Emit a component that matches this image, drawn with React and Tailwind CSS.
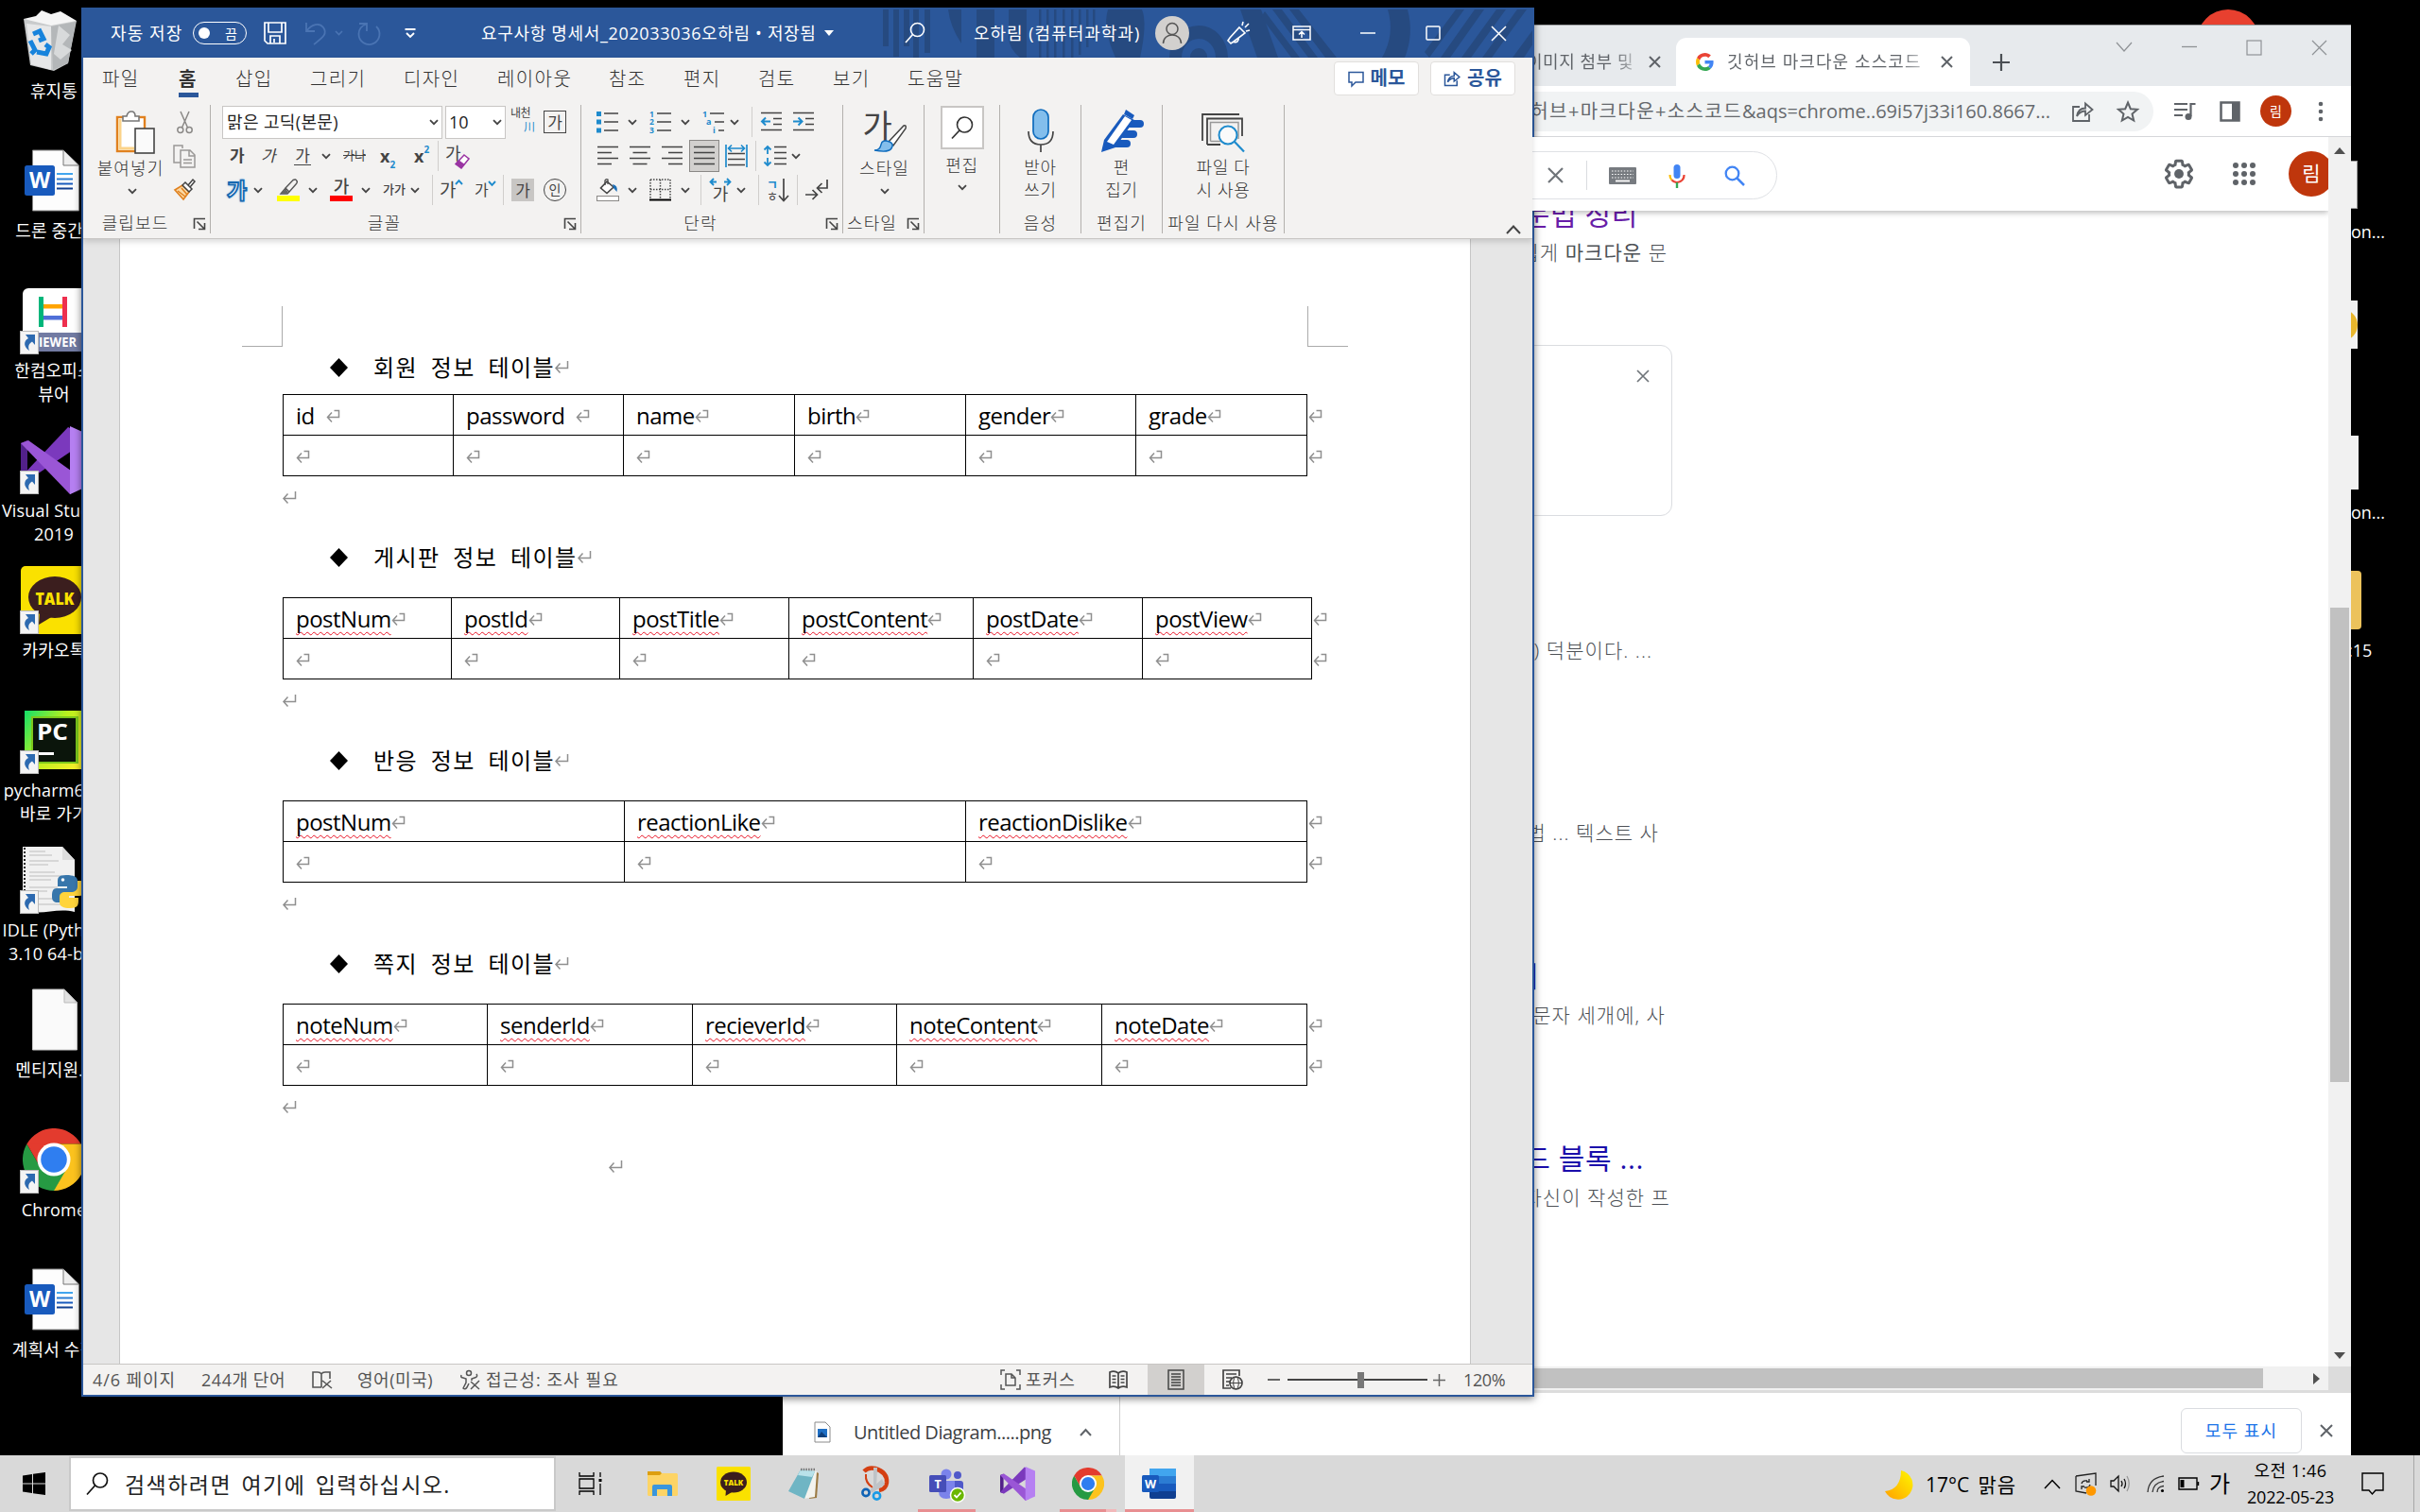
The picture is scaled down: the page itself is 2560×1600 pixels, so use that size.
import React from "react";

/* ---------- small shared pieces ---------- */

const Svg = ({ w, h, className = "", children }) => (
  <svg width={w} height={h} viewBox={`0 0 ${w} ${h}`} fill="none" className={`shrink-0 overflow-visible ${className}`}>
    {children}
  </svg>
);

const Chev = ({ className = "" }) => (
  <Svg w={10} h={7} className={className}>
    <path d="M1 1.2 5 5.2 9 1.2" stroke="#444" strokeWidth="1.8" />
  </Svg>
);

const Sep = ({ className = "" }) => <div className={`h-8 w-px shrink-0 bg-[#d0cecc] ${className}`} />;

const Cross = ({ size = 14, color = "#5f6368", sw = 2, className = "" }) => (
  <Svg w={size} h={size} className={className}>
    <path d={`M1 1 ${size - 1} ${size - 1}M${size - 1} 1 1 ${size - 1}`} stroke={color} strokeWidth={sw} />
  </Svg>
);

const Mark = ({ cell, className = "" }) => (
  <Svg w={15} h={15} className={className}>
    {cell ? (
      <path d="M6 3.500 1.500 8.500 6 13.500M1.500 8.500H13.500V1.500H8.500" stroke="#8f8f8f" strokeWidth="1.500" />
    ) : (
      <path d="M5.500 3.500 1 8.500 5.500 13.500M1 8.500H13.500V1" stroke="#8f8f8f" strokeWidth="1.500" />
    )}
  </Svg>
);

/* ---------- desktop icons ---------- */

const BinIcon = () => (
  <Svg w={66} h={72}>
    <path d="M1 13 57 15 48 60 33 68 8 62Z" fill="#c9cbcc" />
    <path d="M1 13 14 10 20 4 30 8 40 5 57 15 30 20Z" fill="#f5f5f5" />
    <path d="M4 18 30 21V67L9 61Z" fill="#e6e7e8" />
    <path d="M30 21 56 16 48 60 32 67Z" fill="#b4b7b9" />
    <path d="M38 20 50 30 42 40 52 46 40 56 33 50Z" fill="#d8dadb" />
    <path d="M11 29 18 26 22 34 17 36M8 36 13 46 9 50M15 48 25 50 28 43 24 40" stroke="#1783dc" strokeWidth="5" />
  </Svg>
);

const WordDoc = () => (
  <Svg w={66} h={72}>
    <path d="M10.500 4H43L59.500 20V68H10.500Z" fill="#fdfdfd" stroke="#888" />
    <path d="M43 4V20H59" fill="#eee" stroke="#777" />
    <rect x="2" y="20" width="32" height="32" rx="2.500" fill="#185abd" />
    <text x="18" y="44" fill="#fff" fontSize="23" fontWeight="700" textAnchor="middle" fontFamily="Open Sans">W</text>
    <path d="M36 29H53" stroke="#41a5ee" strokeWidth="2" />
    <path d="M36 34.500H53" stroke="#2b7cd3" strokeWidth="2" />
    <path d="M36 39.500H53" stroke="#185abd" strokeWidth="2" />
    <path d="M36 44.500H53" stroke="#103f91" strokeWidth="2" />
  </Svg>
);

const HancomIcon = () => (
  <Svg w={66} h={72}>
    <rect x="0" y="2" width="72" height="67" rx="6" fill="#fff" />
    <path d="M0 49H72V69H5Q0 69 0 64Z" fill="#727ba3" />
    <rect x="19" y="19" width="25" height="4.500" fill="#ffa400" />
    <rect x="19" y="31" width="25" height="4.500" fill="#4f6fd8" />
    <rect x="17" y="11" width="5" height="32" fill="#00b67a" />
    <rect x="42" y="11" width="5" height="32" fill="#ee2f4e" />
    <text x="17" y="63.500" fill="#fff" fontSize="14" fontWeight="700" textLength="40" lengthAdjust="spacingAndGlyphs" fontFamily="Open Sans">IEWER</text>
  </Svg>
);

const VsShape = ({ w, h, className = "" }) => (
  <svg width={w} height={h} viewBox="0 0 72 72" preserveAspectRatio="none" className={`shrink-0 ${className}`}>
    <path d="M0 18 7 15V57L0 54Z" fill="#52218a" />
    <path d="M0 54 50 1 60 6V22L8 57Z" fill="#7b39bd" />
    <path d="M0 18 8 15 60 52V68L52 72Z" fill="#9a56d6" />
    <path d="M52 0 72 9V63L52 72Z" fill="#b680f2" />
  </svg>
);

const KakaoIcon = ({ s, r = 5 }) => (
  <svg width={s} height={s} viewBox="0 0 72 72" className="shrink-0">
    <rect width="72" height="72" rx={r} fill="#fae100" />
    <ellipse cx="36" cy="33" rx="28" ry="22" fill="#3b1e1e" />
    <path d="M20 48 19 62 34 53Z" fill="#3b1e1e" />
    <text x="36" y="40.500" fill="#fae100" fontSize="18" fontWeight="800" textAnchor="middle" textLength="41" lengthAdjust="spacingAndGlyphs" fontFamily="Open Sans">TALK</text>
  </svg>
);

const PyCharmIcon = () => (
  <Svg w={66} h={72}>
    <defs>
      <linearGradient id="pcg" x1="0" y1="0" x2="1" y2="0.6">
        <stop offset="0" stopColor="#12e06a" />
        <stop offset="0.5" stopColor="#b8f01e" />
        <stop offset="1" stopColor="#f5f02a" />
      </linearGradient>
    </defs>
    <rect x="2" y="5" width="68" height="62" fill="url(#pcg)" />
    <rect x="9" y="11" width="50" height="50" fill="#7cc71c" />
    <rect x="11" y="13" width="45" height="46" fill="#0b150b" />
    <text x="15" y="36" fill="#fff" fontSize="24" fontWeight="700" textLength="33" lengthAdjust="spacingAndGlyphs" fontFamily="Open Sans">PC</text>
    <rect x="16" y="49" width="17" height="3" fill="#fff" />
  </Svg>
);

const PythonMark = () => (
  <g>
    <path d="M46 31C37 31 37 34 37 39V43H47V45H36C31 45 31 50 31 54C31 58 33 60 37 60H40V55C40 51 43 50 47 50H52C56 50 58 48 58 45V37C58 33 54 31 46 31Z" fill="#3776ab" />
    <circle cx="42.500" cy="36" r="1.800" fill="#fff" />
    <path d="M50 66C58 66 59 63 59 58V55H49V53H60C65 53 66 48 66 43C66 39 64 37 60 37H58V43C58 47 55 49 51 49H45C41 49 39 51 39 54V60C39 64 43 66 50 66Z" fill="#ffd43b" />
  </g>
);

const IdleIcon = () => (
  <Svg w={66} h={72}>
    <path d="M0 1H42L55 15V70C36 65 22 74 4 69H0Z" fill="#f1f1f1" />
    <path d="M42 1V15H55Z" fill="#ddd" />
    <path d="M2 2V68" stroke="#222" strokeWidth="2" strokeDasharray="2 2" />
    {[6, 10, 16, 20, 28, 32, 36, 44, 48, 56, 62].map((y, i) => (
      <path key={y} d={`M7 ${y}H${24 + ((i * 7) % 18)}`} stroke="#bdbdbd" />
    ))}
    <PythonMark />
  </Svg>
);

const BlankDoc = () => (
  <Svg w={66} h={72}>
    <path d="M10.500 4H44L57.500 18V68H10.500Z" fill="#fafafa" stroke="#ccc" />
    <path d="M44 4V18H57.500Z" fill="#e2e2e2" stroke="#bbb" />
  </Svg>
);

const ChromeMark = ({ s }) => (
  <svg width={s} height={s} viewBox="0 0 66 66" className="shrink-0">
    <path d="M33 33 4.400 16.500A33 33 0 0 1 61.600 16.500H33Z" fill="#e33b2e" />
    <path d="M33 33 61.600 16.500A33 33 0 0 1 33 66L19 41Z" fill="#fcc31e" />
    <path d="M4.400 16.500A33 33 0 0 0 33 66L47.300 41.200 33 33 18.700 41.200Z" fill="#269a43" />
    <path d="M4.400 16.500 18.700 41.200 33 33V16.500Z" fill="#e33b2e" />
    <path d="M33 16.500H61.600L60 25 47.300 41.200 33 66 33 33Z" fill="#fcc31e" />
    <path d="M33 66 47.300 41.200 20 38 18.700 41.200Z" fill="#269a43" />
    <circle cx="33" cy="33" r="17.500" fill="#fff" />
    <circle cx="33" cy="33" r="13.800" fill="#2f7ef0" />
  </svg>
);

const desktopItems = [
  { icon: <BinIcon />, lines: ["휴지통"] },
  { icon: <WordDoc />, lines: ["드론 중간.."] },
  { icon: <HancomIcon />, lines: ["한컴오피스", "뷰어"], link: true },
  { icon: <VsShape w={72} h={72} className="-ml-[2px]" />, lines: ["Visual Studio", "2019"], link: true },
  { icon: <div className="-ml-[2px]"><KakaoIcon s={72} /></div>, lines: ["카카오톡"], link: true },
  { icon: <PyCharmIcon />, lines: ["pycharm64 -", "바로 가기"], link: true },
  { icon: <IdleIcon />, lines: ["IDLE (Python", "3.10 64-bit)"], link: true },
  { icon: <BlankDoc />, lines: ["멘티지원..."] },
  { icon: <ChromeMark s={66} />, lines: ["Chrome"], link: true },
  { icon: <WordDoc />, lines: ["계획서 수정"] },
];

const Desktop = () => (
  <div className="absolute left-0 top-[7px] flex w-[114px] flex-col">
    {desktopItems.map((d, i) => (
      <div key={i} className="flex h-[148px] flex-col items-center">
        <div className="relative flex h-[72px] w-[66px] items-center">
          {d.icon}
          {d.link && (
            <svg width="20" height="25" viewBox="0 0 20 25" className="absolute bottom-0 left-[-3px]">
              <rect x="0.5" y="0.5" width="19" height="24" fill="#f4f4f4" stroke="#bbb" />
              <path d="M6 4H16V15L13 11.500C9 14 8.500 17 10 21C4 17 3.500 11 9 8Z" fill="#2d6ab0" />
            </svg>
          )}
        </div>
        <div className="mt-[5px] whitespace-nowrap text-center text-[18px] leading-[25px] tracking-[0.01em] text-white">
          {d.lines.map((l) => (
            <div key={l}>{l}</div>
          ))}
        </div>
      </div>
    ))}
  </div>
);

const RightDesktop = () => (
  <>
    <div className="absolute left-[2324px] top-[10px] h-[66px] w-[66px] rounded-full bg-[#e8402f]" />
    <div className="absolute left-[2440px] top-[170px] flex w-[100px] flex-col text-[18px] leading-[25px] text-white">
      <div className="h-[51px] w-[54px] border border-[#999] bg-[#f1f1f1]" />
      <div className="mt-[12px] pl-[47px]">on...</div>
      <div className="mt-[60px] flex h-[51px] w-[54px] items-center justify-end bg-[#f1f1f1]">
        <div className="h-[34px] w-[34px] rounded-full bg-[#e8b62c]" />
      </div>
      <div className="mt-[92px] h-[57px] w-[55px] bg-[#f1f1f1]" />
      <div className="mt-[12px] pl-[47px]">on...</div>
      <div className="mt-[49px] h-[62px] w-[58px] rounded-sm bg-[#ecc25c]" />
      <div className="mt-[10px] pl-[44px]">:15</div>
    </div>
  </>
);

/* ---------- browser window ---------- */

const GoogleG = () => (
  <svg width="19" height="19" viewBox="0 0 48 48" className="shrink-0">
    <path fill="#EA4335" d="M24 9.500c3.540 0 6.710 1.220 9.210 3.600l6.850-6.850C35.900 2.380 30.470 0 24 0 14.620 0 6.510 5.380 2.560 13.220l7.980 6.190C12.430 13.720 17.740 9.500 24 9.500z" />
    <path fill="#4285F4" d="M46.980 24.550c0-1.570-.15-3.090-.38-4.550H24v9.020h12.940c-.58 2.960-2.260 5.480-4.780 7.180l7.730 6c4.510-4.180 7.090-10.360 7.090-17.650z" />
    <path fill="#FBBC05" d="M10.530 28.590c-.48-1.450-.76-2.990-.76-4.590s.27-3.140.76-4.590l-7.980-6.190C.92 16.460 0 20.120 0 24c0 3.880.92 7.540 2.560 10.780l7.970-6.190z" />
    <path fill="#34A853" d="M24 48c6.480 0 11.930-2.130 15.890-5.810l-7.730-6c-2.150 1.450-4.920 2.300-8.160 2.300-6.260 0-11.570-4.220-13.470-9.910l-7.980 6.190C6.510 42.620 14.620 48 24 48z" />
  </svg>
);

const ShareIcon = ({ s = 24, color = "#5f6368", sw = 1.8 }) => (
  <svg width={s} height={s} viewBox="0 0 24 24" fill="none" stroke={color} strokeWidth={sw} className="shrink-0">
    <path d="M9 7H2V22H19V15" />
    <path d="M6 17C7 11 10 8.500 15 8.500V3.500L22.500 10 15 16V11.500C11 11.500 8.500 13 6 17Z" />
  </svg>
);

const BrowserTabs = () => (
  <div className="flex h-[65px] items-stretch border-t border-[#9a9c9e] bg-[#e7eaed] pl-[772px]">
    <div className="flex w-[173px] items-center justify-end rounded-br-xl pt-[13px] text-[18px] text-[#5f6368]">
      <span className="whitespace-nowrap bg-gradient-to-r from-[#5f6368] from-80% to-[#b5b8bb] bg-clip-text tracking-[0.03em] text-transparent">이미지 첨부 및</span>
      <Cross size={13} className="ml-[16px] mr-[16px]" />
    </div>
    <div className="mt-[13px] flex w-[311px] items-center rounded-t-[11px] bg-white pl-[21px] text-[18px]">
      <GoogleG />
      <div className="ml-[14px] w-[226px] overflow-hidden whitespace-nowrap bg-gradient-to-r from-[#5f6368] from-80% to-[#dfe0e2] to-95% bg-clip-text tracking-[0.06em] text-transparent">
        깃허브 마크다운 소스코드
      </div>
      <Cross size={13} />
    </div>
    <Svg w={20} h={20} className="ml-[23px] mt-[29px]">
      <path d="M10 1V19M1 10H19" stroke="#4b4f54" strokeWidth="2.200" />
    </Svg>
    <div className="ml-[111px] flex h-[46px] items-center">
      <Svg w={18} h={12}><path d="M1 1 9 10 17 1" stroke="#8f9296" strokeWidth="1.200" /></Svg>
      <Svg w={18} h={12} className="ml-[51px]"><path d="M1 5.500H17" stroke="#8f9296" strokeWidth="1.300" /></Svg>
      <Svg w={17} h={17} className="ml-[51px]"><rect x="1" y="1" width="15" height="15" stroke="#8f9296" strokeWidth="1.200" /></Svg>
      <Cross size={17} color="#8f9296" sw={1.200} className="ml-[52px]" />
    </div>
  </div>
);

const AddressBar = () => (
  <div className="flex h-[54px] items-center border-b border-[#d5d7da] bg-white pl-[12px]">
    <div className="flex h-[42px] w-[1438px] items-center justify-end rounded-full bg-[#f1f3f4] text-[20px] text-[#66696d]">
      <span className="whitespace-nowrap"><span className="tracking-[0.07em]">깃허브+마크다운+소스코드</span>&amp;aqs=chrome..69i57j33i160.8667...</span>
      <span className="ml-[22px]"><ShareIcon /></span>
      <Svg w={24} h={24} className="ml-[24px] mr-[15px]">
        <path d="M12 2.500 14.800 9.200 22 9.800 16.500 14.500 18.200 21.500 12 17.800 5.800 21.500 7.500 14.500 2 9.800 9.200 9.200Z" stroke="#5f6368" strokeWidth="2" />
      </Svg>
    </div>
    <Svg w={24} h={22} className="ml-[21px]">
      <path d="M1 3H15M1 9H15M1 15H10" stroke="#5f6368" strokeWidth="2.200" />
      <path d="M18.500 16V3H23.500" stroke="#5f6368" strokeWidth="2.200" />
      <circle cx="16" cy="16.500" r="3.500" fill="#5f6368" />
    </Svg>
    <Svg w={22} h={22} className="ml-[25px]">
      <path d="M1.500 1.500H20.500V20.500H1.500Z" stroke="#5f6368" strokeWidth="2.500" />
      <path d="M13 1H21V21H13Z" fill="#5f6368" />
    </Svg>
    <div className="ml-[21px] flex h-[33px] w-[33px] items-center justify-center rounded-full bg-[#bf360c] text-[14px] text-white">림</div>
    <Svg w={6} h={22} className="ml-[28px]">
      <circle cx="3" cy="3" r="2.300" fill="#5f6368" /><circle cx="3" cy="11" r="2.300" fill="#5f6368" /><circle cx="3" cy="19" r="2.300" fill="#5f6368" />
    </Svg>
  </div>
);

const SearchHeader = () => (
  <div className="relative z-10 flex h-[78px] items-center bg-white shadow-[0_2px_6px_rgba(0,0,0,0.28)]">
    <div className="mt-[3px] flex h-[51px] w-[1052px] shrink-0 items-center justify-end rounded-full border border-[#dfe1e5] bg-white pr-[33px]">
      <Cross size={17} color="#70757a" sw={2.200} />
      <div className="ml-[24px] h-[31px] w-px bg-[#dadce0]" />
      <Svg w={29} h={18} className="ml-[23px]">
        <rect width="29" height="18" rx="1" fill="#777b80" />
        <path d="M3 4H26M3 7.500H26M3 11H26" stroke="#fff" strokeWidth="1.200" strokeDasharray="1.500 1.700" />
        <path d="M7 14.500H22" stroke="#fff" strokeWidth="1.800" />
      </Svg>
      <Svg w={18} h={26} className="ml-[34px]">
        <rect x="5.500" y="1" width="7" height="15" rx="3.500" fill="#4285f4" />
        <path d="M1.500 12A7.500 7.500 0 0 0 3.500 17.500" stroke="#fbbc04" strokeWidth="2.200" />
        <path d="M3.500 17.500A7.500 7.500 0 0 0 16.500 12" stroke="#ea4335" strokeWidth="2.200" />
        <path d="M9 20V26" stroke="#34a853" strokeWidth="2.400" />
      </Svg>
      <Svg w={22} h={22} className="ml-[41px]">
        <circle cx="8.500" cy="8.500" r="6.800" stroke="#4285f4" strokeWidth="2.300" />
        <path d="M13.500 13.500 21 21" stroke="#4285f4" strokeWidth="2.500" />
      </Svg>
    </div>
    <svg width="36" height="36" viewBox="0 0 24 24" className="ml-[407px] shrink-0">
      <path fill="#5f6368" d="M13.850 22.250h-3.700c-.740 0-1.360-.540-1.450-1.270l-.270-1.890c-.270-.140-.530-.290-.790-.460l-1.800.720c-.700.260-1.470-.030-1.810-.650L2.200 15.530c-.350-.660-.200-1.440.360-1.880l1.530-1.190c-.010-.150-.020-.300-.020-.460 0-.150.010-.310.020-.460l-1.520-1.190c-.590-.450-.740-1.260-.370-1.880l1.850-3.190c.340-.620 1.110-.900 1.790-.630l1.810.730c.260-.170.520-.320.780-.460l.270-1.910c.090-.700.710-1.250 1.440-1.250h3.700c.740 0 1.360.540 1.450 1.270l.270 1.890c.270.140.530.290.790.460l1.800-.720c.710-.260 1.480.030 1.820.650l1.840 3.180c.360.660.200 1.440-.360 1.880l-1.520 1.190c.010.150.020.300.020.460s-.010.310-.020.460l1.520 1.190c.560.450.720 1.230.370 1.860l-1.860 3.220c-.340.620-1.110.900-1.800.630l-1.800-.720c-.260.170-.520.320-.780.460l-.270 1.910c-.100.680-.720 1.220-1.460 1.220zm-3.230-2h2.760l.370-2.550.53-.22c.44-.18.88-.44 1.340-.78l.45-.34 2.380.960 1.380-2.400-2.030-1.580.07-.56c.03-.26.06-.51.06-.78s-.03-.53-.06-.78l-.07-.56 2.030-1.580-1.390-2.400-2.390.960-.45-.35c-.42-.32-.87-.58-1.330-.77l-.52-.22-.37-2.550h-2.760l-.37 2.550-.53.210c-.44.190-.88.440-1.340.79l-.45.330-2.380-.95-1.390 2.390 2.030 1.580-.07.560a7 7 0 0 0-.06.790c0 .260.020.530.060.780l.07.560-2.030 1.580 1.380 2.400 2.390-.96.45.35c.43.330.86.580 1.330.77l.53.220.38 2.550z" />
      <circle cx="12" cy="12" r="3.300" fill="#5f6368" />
    </svg>
    <Svg w={26} h={26} className="ml-[38px]">
      {[4, 13, 22].map((y) => [4, 13, 22].map((x) => <circle key={`${x}-${y}`} cx={x} cy={y} r="3" fill="#5f6368" />))}
    </Svg>
    <div className="ml-[34px] w-[43px] overflow-hidden">
      <div className="flex h-12 w-12 items-center justify-center rounded-full bg-[#bf360c] text-[21px] text-white">림</div>
    </div>
  </div>
);

const Results = () => (
  <div className="h-[1223px] text-right text-[21px] font-light tracking-[0.05em] text-[#4d5156]">
    <div className="-mt-[18px] h-[44px] w-[905px] text-[30px] font-normal leading-[44px] tracking-[0.02em] text-[#681da8]">문법 정리</div>
    <div className="mt-[2px] h-[32px] w-[936px] leading-[32px]">
      쉽게 <b>마크다운</b> 문
    </div>
    <div className="mt-[82px] flex h-[181px] w-[941px] justify-end rounded-xl border border-[#dadce0] pr-[23px] pt-[25px]">
      <Cross size={14} color="#70757a" sw={1.700} />
    </div>
    <div className="mt-[126px] h-[32px] w-[920px] leading-[32px]">) 덕분이다. ...</div>
    <div className="mt-[161px] h-[32px] w-[927px] leading-[32px]">문법 ... 텍스트 사</div>
    <div className="mt-[114px] h-[44px] w-[799px] text-[30px] font-normal leading-[44px] tracking-normal text-[#1a0dab]">코드 삽입하는 방법 소개</div>
    <div className="mt-[3px] h-[32px] w-[934px] leading-[32px]">문자 세개에, 사</div>
    <div className="mt-[114px] h-[44px] w-[911px] text-[30px] font-normal leading-[44px] tracking-[0.02em] text-[#1a0dab]">코드 블록 ...</div>
    <div className="mt-[3px] h-[32px] w-[939px] leading-[32px]">자신이 작성한 프</div>
  </div>
);

const BrowserWindow = () => (
  <div className="absolute left-[828px] top-[26px] flex h-[1514px] w-[1659px] flex-col bg-white">
    <BrowserTabs />
    <AddressBar />
    <div className="flex h-[1301px] bg-white">
      <div className="w-[1635px] overflow-hidden">
        <SearchHeader />
        <Results />
      </div>
      <div className="flex w-[24px] flex-col items-center bg-[#f1f1f1] pt-[11px]">
        <Svg w={12} h={8}><path d="M0 7 6 0 12 7Z" fill="#505050" /></Svg>
        <div className="mt-[479px] h-[502px] w-[20px] bg-[#c1c1c1]" />
        <Svg w={12} h={8} className="mt-[286px]"><path d="M0 0H12L6 7Z" fill="#505050" /></Svg>
      </div>
    </div>
    <div className="flex h-[25px] items-center">
      <div className="flex h-[25px] w-[1635px] items-center bg-[#f1f1f1]">
        <div className="h-[21px] w-[1566px] bg-[#c1c1c1]" />
        <Svg w={7} h={12} className="ml-[53px]"><path d="M0 0V12L7 6Z" fill="#505050" /></Svg>
      </div>
      <div className="h-full w-[24px] bg-[#dcdcdc]" />
    </div>
    <div className="h-[3px] bg-[#dcdcdc]" />
    <div className="flex h-[66px] items-center">
      <div className="flex h-full w-[357px] items-center border-r border-[#cfcfcf] pl-[33px] pt-[17px]">
        <Svg w={18} h={23}>
          <path d="M1 1H12L17 6V22H1Z" fill="#fff" stroke="#8a8a8a" />
          <rect x="4" y="8" width="10" height="9" fill="#1f6fc4" />
          <path d="M4 17 8 11 14 17Z" fill="#103f7a" />
        </Svg>
        <span className="ml-[24px] w-[239px] whitespace-nowrap text-[20px] tracking-[-0.5px] text-[#3c4043]">Untitled Diagram.....png</span>
        <Svg w={13} h={9}><path d="M1 8 6.500 2 12 8" stroke="#5f6368" strokeWidth="2" /></Svg>
      </div>
      <div className="ml-[1122px] mt-[14px] flex h-[48px] w-[128px] items-center justify-center rounded-md border border-[#dadce0] text-[18px] tracking-[0.06em] text-[#1a73e8]">
        모두 표시
      </div>
      <Cross size={14} className="ml-[19px] mt-[14px]" />
    </div>
  </div>
);

/* ---------- word processor: title bar ---------- */

const TitleArt = () => (
  <svg width="700" height="51" viewBox="921 10 700 51" className="absolute right-0 top-[2px]" fill="#264a80">
    <path d="M934 10h6v39h-6zM945 10h6v50h-6zM956 10h6v39h-6zM966 10h6v51h-6zM978 10h6v46h-6z" />
    <path d="M1003 10H1017V46Q1005 28 1003 10ZM1033 10h19v51h-19zM1067 10h19v51h-7q-12-10-12-22Z" />
    {[1099, 1107, 1115, 1124, 1133, 1141, 1149, 1156].map((x, i) => (
      <rect key={x} x={x} y="10" width="2.500" height={i < 5 ? 51 : 88 - i * 8} />
    ))}
    <path d="M1172 10H1208Q1214 24 1206 61H1180Q1166 30 1172 10Z" />
    <path d="M1237 61A31 34 0 0 1 1299 61H1286A18 20 0 0 0 1250 61Z" />
    <circle cx="1268" cy="60" r="9" />
    <path d="M1312 10H1334L1352 61H1330Z" />
    <path d="M1334 18 1366 61H1375L1338 12ZM1346 10 1384 61H1394L1356 10ZM1364 10 1402 61H1414L1374 10Z" />
    <path d="M1468 10H1489Q1496 36 1486 61H1462Q1476 36 1468 10Z" />
    <path d="M1507 55 1540 10H1549L1512 61ZM1524 61 1560 10H1570L1534 61ZM1546 61 1583 10H1593L1556 61ZM1568 61 1605 10H1615L1578 61ZM1600 61 1630 20V34L1612 61Z" />
  </svg>
);

const TitleBar = () => (
  <div className="relative flex h-[53px] items-center bg-[#2b579a] text-[18px] text-white">
    <TitleArt />
    <div className="relative flex w-full items-center pt-px">
      <span className="ml-[29px] w-[87px] shrink-0 whitespace-nowrap tracking-[0.06em]">자동 저장</span>
      <div className="flex h-[24px] w-[57px] shrink-0 items-center rounded-full border-[1.5px] border-white pl-[5px] text-[14px]">
        <div className="h-[12px] w-[12px] rounded-full bg-white" />
        <span className="ml-[16px]">끔</span>
      </div>
      <Svg w={24} h={24} className="ml-[18px]">
        <path d="M1 1H23V23H4L1 20ZM5 1V11H19V1M7 23V15H17V23M11 18V22" stroke="#fff" strokeWidth="1.700" />
      </Svg>
      <Svg w={23} h={25} className="ml-[20px]"><path d="M1 1V10H10M1.500 9.500C7 2 15 1 19 6C24 13 18 17 9 24" stroke="#4a74b3" strokeWidth="1.800" /></Svg>
      <Svg w={9} h={6} className="ml-[8px]"><path d="M1 1 4.500 4.500 8 1" stroke="#4a74b3" strokeWidth="1.600" /></Svg>
      <Svg w={25} h={25} className="ml-[15px]"><path d="M2 2H10V10M9.500 2.500C4 4.500 1.500 8 1.500 13A11 11 0 1 0 20 5" stroke="#4a74b3" strokeWidth="1.800" /></Svg>
      <Svg w={12} h={11} className="ml-[25px]"><path d="M0.500 1H11.500M2 5 6 9 10 5" stroke="#fff" strokeWidth="1.900" /></Svg>
      <span className="ml-[69px] w-[363px] shrink-0 whitespace-nowrap tracking-[0.037em]">요구사항 명세서_202033036오하림 • 저장됨</span>
      <Svg w={10} h={6}><path d="M0 0H10L5 6Z" fill="#fff" /></Svg>
      <Svg w={22} h={24} className="ml-[75px]"><circle cx="13.500" cy="8.500" r="7" stroke="#fff" strokeWidth="1.600" /><path d="M8.500 13.500 1 22" stroke="#fff" strokeWidth="1.600" /></Svg>
      <span className="ml-[51px] w-[192px] shrink-0 whitespace-nowrap tracking-[0.055em]">오하림 (컴퓨터과학과)</span>
      <Svg w={36} h={36}>
        <circle cx="18" cy="18" r="18" fill="#d2d0ce" />
        <circle cx="18" cy="13.500" r="6" stroke="#555" strokeWidth="1.500" />
        <path d="M8.500 29C8.500 17 27.500 17 27.500 29" stroke="#555" strokeWidth="1.500" />
      </Svg>
      <Svg w={26} h={26} className="ml-[39px]">
        <path d="M14 7 20 13 8 22 5 24 2 21 4 18ZM8 22C11 24 14 21 13 18M17 5 18 1M20 7 24 3M21 11 25 10" stroke="#fff" strokeWidth="1.600" />
      </Svg>
      <Svg w={20} h={16} className="ml-[44px]"><path d="M1 1H19V15H1ZM1 4.500H19M10 13V7M7 9.500 10 6.500 13 9.500" stroke="#fff" strokeWidth="1.500" /></Svg>
      <Svg w={16} h={4} className="ml-[52px]"><path d="M0 2H16" stroke="#fff" strokeWidth="1.500" /></Svg>
      <Svg w={16} h={16} className="ml-[53px]"><rect x="1" y="1" width="14" height="14" rx="1" stroke="#fff" strokeWidth="1.500" /></Svg>
      <Cross size={17} color="#fff" sw={1.500} className="ml-[53px]" />
    </div>
  </div>
);

/* ---------- word processor: ribbon ---------- */

const TabsRow = () => (
  <div className="flex h-[50px] items-start pt-[4px] text-[20px] font-light leading-[38px] tracking-[0.07em] text-[#333]">
    <span className="ml-[20px] w-[81px]">파일</span>
    <div className="w-[60px] font-bold">
      <span>홈</span>
      <div className="-mt-[5px] h-[5px] w-[21px] bg-[#2b579a]" />
    </div>
    <span className="w-[79px]">삽입</span>
    <span className="w-[99px]">그리기</span>
    <span className="w-[99px]">디자인</span>
    <span className="w-[118px]">레이아웃</span>
    <span className="w-[79px]">참조</span>
    <span className="w-[79px]">편지</span>
    <span className="w-[79px]">검토</span>
    <span className="w-[79px]">보기</span>
    <span className="w-[451px]">도움말</span>
    <div className="flex h-[36px] w-[90px] items-center justify-center gap-[7px] rounded border border-[#e1dfdd] bg-white text-[20px] font-bold tracking-normal text-[#2b579a]">
      <Svg w={17} h={17}><path d="M1 1.500H16V12H8L4 16V12H1Z" stroke="#2b579a" strokeWidth="1.500" /></Svg>
      메모
    </div>
    <div className="ml-[12px] flex h-[36px] w-[90px] items-center justify-center gap-[7px] rounded border border-[#e1dfdd] bg-white text-[20px] font-bold tracking-normal text-[#2b579a]">
      <ShareIcon s={18} color="#2b579a" sw={2} />
      공유
    </div>
  </div>
);

const Launcher = () => (
  <div className="w-[24px] pl-[6px]">
    <Svg w={14} h={14} className="mt-px">
      <path d="M1.500 12V1.500H13M4.500 4.500 12 12M12.500 6V12.500H6" stroke="#444" strokeWidth="1.600" />
    </Svg>
  </div>
);

const Group = ({ label, launcher, width, children }) => (
  <div className={`flex h-[136px] shrink-0 flex-col border-r border-[#b3b0ad] ${width}`}>
    <div className="h-[118px]">{children}</div>
    <div className="flex h-[22px] items-center">
      <div className="flex-1 whitespace-nowrap text-center text-[18px] font-light leading-[22px] tracking-[0.06em] text-[#333]">{label}</div>
      {launcher && <Launcher />}
    </div>
  </div>
);

const Row = ({ children }) => <div className="flex h-9 items-center">{children}</div>;

const Lines = ({ d, children, w = 22 }) => (
  <Svg w={w} h={24}>
    <path d={d} stroke="#444" strokeWidth="1.700" />
    {children}
  </Svg>
);

const FontGroup = () => (
  <Group label="글꼴" launcher width="w-[392px]">
    <Row>
      <div className="ml-[12px] flex h-[35px] w-[233px] items-center justify-between border border-[#c8c6c4] bg-white pl-[4px] pr-[3px] text-[18px] tracking-[0.02em] text-[#222]">
        맑은 고딕(본문)<Chev />
      </div>
      <div className="ml-[3px] flex h-[35px] w-[64px] items-center justify-between border border-[#c8c6c4] bg-white pl-[3px] pr-[3px] text-[18px] text-[#222]">
        10<Chev />
      </div>
      <div className="ml-[5px] flex h-[30px] w-[25px] flex-col text-[12px] leading-[12px] tracking-tighter">
        내천
        <span className="ml-[14px] mt-[2px] text-[12px] leading-[14px] text-[#1e8bcd]">川</span>
      </div>
      <div className="ml-[10px] flex h-[24px] w-[24px] items-center justify-center border-[1.5px] border-[#444] text-[17px] leading-none">가</div>
    </Row>
    <Row>
      <span className="ml-[20px] w-[17px] text-[17px] font-bold">가</span>
      <span className="ml-[16px] w-[18px] text-[17px] italic">가</span>
      <span className="ml-[17px] w-[18px] border-b-[1.5px] border-[#444] text-center text-[17px] leading-[19px]">가</span>
      <Chev className="ml-[11px]" />
      <span className="ml-[13px] w-[24px] whitespace-nowrap text-[13px] line-through">가나</span>
      <span className="ml-[15px] flex w-[18px] items-end text-[18px] font-bold leading-[18px]">x<small className="mb-[-6px] text-[10px] leading-[12px] text-[#1e8bcd]">2</small></span>
      <span className="ml-[18px] flex w-[18px] items-start text-[18px] font-bold leading-[18px]">x<small className="mt-[-4px] text-[10px] leading-[12px] text-[#1e8bcd]">2</small></span>
      <Sep className="ml-[7px]" />
      <div className="relative ml-[7px] h-[26px] w-[26px] text-[18px] leading-[20px]">
        가
        <svg width="16" height="16" viewBox="0 0 16 16" className="absolute bottom-[-1px] right-0">
          <path d="M10 1 15 5 7 15 1 10.500Z" fill="#fff" stroke="#9a35a3" strokeWidth="1.500" />
          <path d="M1 10.500 4.500 6.500 10.500 10.800 7 15Z" fill="#9a35a3" />
        </svg>
      </div>
    </Row>
    <Row>
      <span className="ml-[17px] w-[23px] text-[23px] font-bold leading-none text-white [-webkit-text-stroke:1.8px_#1768b0] [text-shadow:0_0_3px_#4aa3e8,0_0_2px_#4aa3e8]">가</span>
      <Chev className="ml-[5px]" />
      <Svg w={24} h={24} className="ml-[15px]">
        <path d="M9 10 17 1.500Q20 0 21 2.500 22 4 20 6L13 14ZM9 10 13 14 11 16H4Z" fill="#f3f2f1" stroke="#555" strokeWidth="1.400" />
        <path d="M9 11 12 14 11 16H4Z" fill="#666" />
        <rect y="18" width="24" height="6" fill="#ff0" />
      </Svg>
      <Chev className="ml-[9px]" />
      <div className="ml-[13px] flex h-[24px] w-[24px] flex-col items-center border-b-[6px] border-[#f00] text-[18px] font-medium leading-[17px]">가</div>
      <Chev className="ml-[9px]" />
      <span className="ml-[13px] w-[23px] whitespace-nowrap text-[13px] font-medium">가가</span>
      <Chev className="ml-[6px]" />
      <Sep className="ml-[13px]" />
      <div className="ml-[7px] flex w-[25px] items-start text-[19px] leading-[22px]">
        가<Svg w={9} h={6} className="-ml-[1px]"><path d="M1 5 4.500 1.200 8 5" stroke="#1e8bcd" strokeWidth="1.900" /></Svg>
      </div>
      <div className="ml-[12px] flex w-[22px] items-start text-[16px] leading-[20px]">
        가<Svg w={9} h={6} className="-ml-[1px]"><path d="M1 1 4.500 4.800 8 1" stroke="#1e8bcd" strokeWidth="1.900" /></Svg>
      </div>
      <Sep className="ml-[8px]" />
      <div className="ml-[8px] flex h-[24px] w-[24px] items-center justify-center bg-[#c8c6c4] text-[17px] leading-none">가</div>
      <div className="ml-[10px] flex h-[24px] w-[24px] items-center justify-center rounded-full border-[1.5px] border-[#444] text-[14px] leading-none">인</div>
    </Row>
  </Group>
);

const ParagraphGroup = () => (
  <Group label="단락" launcher width="w-[277px]">
    <Row>
      <span className="ml-[16px]"><Lines w={24} d="M8 3H23M8 12H23M8 21H23"><path d="M0 1h5v5H0zM0 9.500h5v5H0zM0 18.500h5v5H0z" fill="#1e8bcd" /></Lines></span>
      <Chev className="ml-[9px]" />
      <span className="ml-[13px]">
        <Lines w={24} d="M8 3H23M8 12H23M8 21H23">
          <g fill="#1e8bcd" fontSize="8.500" fontWeight="700" fontFamily="Open Sans"><text x="0" y="6.500">1</text><text x="0" y="15">2</text><text x="0" y="24">3</text></g>
        </Lines>
      </span>
      <Chev className="ml-[9px]" />
      <span className="ml-[13px]">
        <Lines w={24} d="M8 3H23M13 12H23M17 21H23">
          <g fill="#1e8bcd" fontSize="9" fontWeight="700" fontFamily="Open Sans"><text x="0" y="6.500">1</text><text x="4" y="15">a</text><text x="11" y="24">i</text></g>
        </Lines>
      </span>
      <Chev className="ml-[5px]" />
      <Sep className="ml-[13px]" />
      <span className="ml-[9px]"><Lines d="M0 2.500H22M13 8.500H22M13 14.500H22M0 20.500H22"><path d="M10 11.500H1.500M5 7.500 1 11.500 5 15.500" stroke="#1e8bcd" strokeWidth="2" /></Lines></span>
      <span className="ml-[12px]"><Lines d="M0 2.500H22M13 8.500H22M13 14.500H22M0 20.500H22"><path d="M0 11.500H9M5.500 7.500 9.500 11.500 5.500 15.500" stroke="#1e8bcd" strokeWidth="2" /></Lines></span>
    </Row>
    <Row>
      <span className="ml-[17px]"><Lines d="M0 2.500H22M0 8.500H15M0 14.500H22M0 20.500H15" /></span>
      <span className="ml-[12px]"><Lines d="M0 2.500H22M3.500 8.500H18.500M0 14.500H22M3.500 20.500H18.500" /></span>
      <span className="ml-[12px]"><Lines d="M0 2.500H22M7 8.500H22M0 14.500H22M7 20.500H22" /></span>
      <div className="ml-[7px] flex h-[34px] w-[32px] items-center justify-center border border-[#8a8886] bg-[#d2d0ce]">
        <Lines d="M0 2.500H22M0 8.500H22M0 14.500H22M0 20.500H22" />
      </div>
      <span className="ml-[6px]"><Lines w={24} d="M3 9.500H21M3 15.500H21M3 21.500H21"><path d="M1 0V24M23 0V24M4 4H20M7 0.500 3.500 4 7 7.500M17 0.500 20.500 4 17 7.500" stroke="#1e8bcd" strokeWidth="1.700" /></Lines></span>
      <Sep className="ml-[8px]" />
      <span className="ml-[8px]"><Lines w={24} d="M11 2.500H24M11 8.500H24M11 14.500H24M11 20.500H24"><path d="M4 2V10M4 14V22M0.500 5.500 4 2 7.500 5.500M0.500 18.500 4 22 7.500 18.500" stroke="#1e8bcd" strokeWidth="1.800" /></Lines></span>
      <Chev className="ml-[5px]" />
    </Row>
    <Row>
      <Svg w={24} h={24} className="ml-[16px]">
        <path d="M11 3 18 9 11 15.500 4.500 10Z" fill="#fff" stroke="#444" strokeWidth="1.600" />
        <path d="M9 7V2Q10 0 12 1V6" stroke="#444" strokeWidth="1.300" />
        <path d="M17 6Q23 7 21.500 14L18 10Z" fill="#1b6fb8" />
        <rect x="0.500" y="18.500" width="23" height="5" fill="#fff" stroke="#8a8886" />
      </Svg>
      <Chev className="ml-[9px]" />
      <Svg w={23} h={24} className="ml-[13px]">
        <path d="M1 1H22V22M1 1V22M11.500 1V22M1 11.500H22" stroke="#444" strokeWidth="1.500" strokeDasharray="1.500 1.500" />
        <path d="M0 22.500H23" stroke="#000" strokeWidth="2" />
      </Svg>
      <Chev className="ml-[10px]" />
      <Sep className="ml-[11px]" />
      <div className="ml-[8px] flex h-[26px] w-[24px] flex-col items-center">
        <Svg w={24} h={9}><path d="M8 4.500H1.500M5 1 1.500 4.500 5 8M16 4.500H22.500M19 1 22.500 4.500 19 8" stroke="#1e8bcd" strokeWidth="1.800" /></Svg>
        <span className="mt-px text-[18px] leading-[15px]">가</span>
      </div>
      <Chev className="ml-[5px]" />
      <Sep className="ml-[13px]" />
      <div className="ml-[8px] flex h-[25px] w-[24px] items-center">
        <div className="flex flex-col text-[13px] leading-[12px]"><span className="font-bold text-[#1e8bcd]">ㄱ</span><span>ㅎ</span></div>
        <Svg w={12} h={25}><path d="M6 0V23M1 18 6 23.500 11 18" stroke="#444" strokeWidth="1.700" /></Svg>
      </div>
      <Sep className="ml-[8px]" />
      <Svg w={24} h={24} className="ml-[8px]"><path d="M0 17H12M7.500 12 12.500 17 7.500 22M23 1V10H13M17.500 5 12.500 10 17.500 15" stroke="#444" strokeWidth="1.700" /></Svg>
    </Row>
  </Group>
);

const Stack = ({ icon, lines, pad = "pt-[4px]" }) => (
  <div className={`flex flex-col items-center ${pad}`}>
    {icon}
    <div className="mt-[4px] text-center text-[18px] font-light leading-[24px] tracking-[0.04em] text-[#333]">{lines.map((l) => <div key={l} className="whitespace-pre">{l}</div>)}</div>
  </div>
);

const Ribbon = () => (
  <div className="relative z-10 h-[192px] border-b border-[#c8c6c4] bg-[#f3f2f1] text-[#444] shadow-[0_3px_6px_rgba(0,0,0,0.14)]">
    <TabsRow />
    <div className="flex">
      <Group label="클립보드" launcher width="w-[135px]">
        <div className="flex">
          <div className="flex w-[95px] flex-col items-center pl-[9px] pt-[6px]">
            <Svg w={42} h={47} className="ml-[5px]">
              <rect x="2" y="7" width="29" height="36" fill="#fff" stroke="#e0811f" strokeWidth="2.400" />
              <path d="M5 9V40H20" stroke="#fbd38a" strokeWidth="3" />
              <path d="M8 11V6H12Q13 1 17 1T21 6H25V11Z" fill="#fff" stroke="#777" strokeWidth="1.600" />
              <rect x="21" y="19" width="20" height="26" fill="#fafafa" stroke="#444" strokeWidth="1.600" />
            </Svg>
            <span className="-ml-[4px] mt-[2px] whitespace-nowrap text-[18px] font-light leading-[24px] tracking-[0.06em] text-[#333]">붙여넣기</span>
            <Chev className="mt-[9px]" />
          </div>
          <div className="flex w-[24px] flex-col items-center">
            <Row>
              <Svg w={17} h={25}><path d="M4 1 11.500 18M13 1 5.500 18" stroke="#8a8886" strokeWidth="1.500" /><circle cx="3.800" cy="20.500" r="3" stroke="#8a8886" strokeWidth="1.500" /><circle cx="13.200" cy="20.500" r="3" stroke="#8a8886" strokeWidth="1.500" /></Svg>
            </Row>
            <Row>
              <Svg w={24} h={25}><path d="M8 19H1V1H10V4M8 6H18L23 11V24H8ZM17 6V12H23M11 16H20M11 19.500H20" stroke="#9a9896" strokeWidth="1.500" /></Svg>
            </Row>
            <Row>
              <Svg w={24} h={24}><path d="M2 12 10 7 17 14 11 22Z" fill="#fbd9a5" stroke="#e0811f" strokeWidth="1.700" /><path d="M5 13 13 19M9 10 15 17" stroke="#e0811f" strokeWidth="1.500" /><path d="M10 7 13 4 20 11 17 14ZM16 7 21 1 23 3 18 9" fill="#fff" stroke="#444" strokeWidth="1.500" /></Svg>
            </Row>
          </div>
        </div>
      </Group>
      <FontGroup />
      <ParagraphGroup />
      <Group label="스타일" launcher width="w-[86px]">
        <div className="flex flex-col items-center pl-[2px] pt-[6px]">
          <div className="relative h-[46px] w-[46px] text-[34px] leading-[32px]">
            가
            <svg width="36" height="32" viewBox="0 0 36 32" fill="none" className="absolute bottom-0 right-0">
              <path d="M17 19 33 2Q36 1 35 5L22 23Z" fill="#fff" stroke="#444" strokeWidth="1.500" />
              <path d="M2 28Q8 28 9 22T18 19Q23 21 20 26T2 28Z" fill="#83beec" stroke="#0f6cbd" strokeWidth="1.500" />
            </svg>
          </div>
          <span className="mt-[3px] text-[18px] font-light leading-[24px] tracking-[0.06em] text-[#333]">스타일</span>
          <Chev className="mt-[9px]" />
        </div>
      </Group>
      <Group label="" width="w-[80px]">
        <div className="flex flex-col items-center pt-[1px]">
          <div className="flex h-[46px] w-[46px] items-center justify-center border-2 border-[#c8c6c4] bg-white">
            <Svg w={24} h={25}><circle cx="14.500" cy="9" r="8" stroke="#333" strokeWidth="1.600" /><path d="M9 15 1 23.500" stroke="#333" strokeWidth="1.800" /></Svg>
          </div>
          <span className="mt-[4px] text-[18px] font-light leading-[26px] tracking-[0.04em] text-[#333]">편집</span>
          <Chev className="mt-[7px]" />
        </div>
      </Group>
      <Group label="음성" width="w-[86px]">
        <Stack
          lines={["받아", "쓰기"]}
          icon={
            <Svg w={28} h={46}>
              <rect x="6" y="1" width="16" height="31" rx="8" fill="#83beec" stroke="#0f6cbd" strokeWidth="1.700" />
              <path d="M1 24Q1 38 14 38T27 24M14 38V46" stroke="#444" strokeWidth="1.700" />
            </Svg>
          }
        />
      </Group>
      <Group label="편집기" width="w-[86px]">
        <Stack
          lines={["편", "집기"]}
          icon={
            <Svg w={46} h={46}>
              <path d="M30 16H42M24 27H35M17 37H28" stroke="#185abd" strokeWidth="8" strokeLinecap="round" />
              <path d="M24 6 36 12 16 41 1 46 4 33Z" fill="#185abd" />
              <path d="M26 8 33 12 14 38 7 35Z" fill="#fff" />
              <path d="M27 1 36 7 34 11 25 6Z" fill="#185abd" />
            </Svg>
          }
        />
      </Group>
      <Group label="파일 다시 사용" width="w-[129px]">
        <Stack
          pad="pt-[8px]"
          lines={["파일 다", "시 사용"]}
          icon={
            <Svg w={46} h={42}>
              <path d="M1 30V2H40M6 34V6.500H43V25M6 34H20" stroke="#444" strokeWidth="1.800" />
              <path d="M9.500 30.500V10.500H39V28M9.500 30.500H20" stroke="#999" strokeWidth="1.500" />
              <circle cx="28" cy="24" r="9.500" fill="#fafafa" stroke="#1e8bcd" strokeWidth="2" />
              <path d="M35 31 45 41.500" stroke="#1e8bcd" strokeWidth="2.200" />
            </Svg>
          }
        />
      </Group>
      <Svg w={16} h={10} className="ml-[234px] mt-[127px]"><path d="M1 9 8 1.500 15 9" stroke="#444" strokeWidth="2" /></Svg>
    </div>
  </div>
);

/* ---------- word processor: document ---------- */

const Cell = ({ text, gap, plain, width, last }) => (
  <div className={`flex h-full shrink-0 items-center pl-[13px] ${width} ${last ? "" : "border-r border-black"}`}>
    {text && (
      <span
        className={`mt-[2px] whitespace-pre tracking-[-0.5px] ${plain ? "" : "underline decoration-[#e81123] decoration-wavy decoration-[1.3px] underline-offset-[4px] [text-decoration-skip-ink:none]"}`}
      >
        {text}
      </span>
    )}
    <Mark cell className={gap ? "ml-[12px] mt-[2px]" : "mt-[2px]"} />
  </div>
);

const DocTable = ({ title, titleGap, cells, widths, total, plain }) => (
  <div className="h-[215px]">
    <div className="flex h-[35px] items-center pl-[50px]">
      <Svg w={19} h={20}><path d="M9.500 0 19 10 9.500 20 0 10Z" fill="#000" /></Svg>
      <span className="ml-[27px] whitespace-nowrap text-[24px] leading-[35px] tracking-[0.06em] [word-spacing:6px]">{title}</span>
      <Mark />
    </div>
    <div className={`flex ${titleGap}`}>
      <div className={`h-[87px] border border-black text-[24px] leading-[32px] ${total}`}>
        <div className="flex h-[43px] border-b border-black">
          {cells.map((c, i) => (
            <Cell key={i} text={c.trim()} gap={c.endsWith(" ")} plain={plain} width={widths[i]} last={i === cells.length - 1} />
          ))}
        </div>
        <div className="flex h-[42px]">
          {cells.map((c, i) => (
            <Cell key={i} width={widths[i]} last={i === cells.length - 1} />
          ))}
        </div>
      </div>
      <div className="flex h-[87px] flex-col pl-[1px]">
        <Mark cell className="mt-[16px]" />
        <Mark cell className="mt-[28px]" />
      </div>
    </div>
    <Mark className="mt-[15px]" />
  </div>
);

const Page = () => (
  <div className="flex h-[1190px] bg-[#e6e6e6]">
    <div className="ml-[38px] h-full w-[1430px] border-x border-[#c6c6c6] bg-white text-black">
      <div className="flex justify-between pl-[129px] pr-[129px] pt-[71px]">
        <div className="h-[43px] w-[43px] border-b border-r border-[#ababab]" />
        <div className="h-[43px] w-[43px] border-b border-l border-[#ababab]" />
      </div>
      <div className="flex flex-col pl-[172px] pt-[4px]">
        <div className="h-[201px]">
          <DocTable
            title="회원 정보 테이블"
            titleGap="mt-[11px]"
            plain
            cells={["id ", "password ", "name", "birth", "gender", "grade"]}
            widths={["w-[180px]", "w-[180px]", "w-[181px]", "w-[181px]", "w-[180px]", "w-[180px]"]}
            total="w-[1084px]"
          />
        </div>
        <DocTable
          title="게시판 정보 테이블"
          titleGap="mt-[25px]"
          cells={["postNum", "postId", "postTitle", "postContent", "postDate", "postView"]}
          widths={["w-[178px]", "w-[178px]", "w-[179px]", "w-[195px]", "w-[179px]", "w-[178px]"]}
          total="w-[1089px]"
        />
        <DocTable
          title="반응 정보 테이블"
          titleGap="mt-[25px]"
          cells={["postNum", "reactionLike", "reactionDislike"]}
          widths={["w-[361px]", "w-[361px]", "w-[360px]"]}
          total="w-[1084px]"
        />
        <DocTable
          title="쪽지 정보 테이블"
          titleGap="mt-[25px]"
          cells={["noteNum", "senderId", "recieverId", "noteContent", "noteDate"]}
          widths={["w-[216px]", "w-[217px]", "w-[216px]", "w-[217px]", "w-[216px]"]}
          total="w-[1084px]"
        />
        <Mark className="ml-[345px] mt-[10px]" />
      </div>
    </div>
  </div>
);

const StatusBar = () => (
  <div className="flex h-[33px] items-center border-t border-[#c8c6c4] bg-[#f3f2f1] text-[18px] text-[#555]">
    <span className="ml-[10px] w-[115px] whitespace-nowrap tracking-[0.05em]">4/6 페이지</span>
    <span className="w-[117px] whitespace-nowrap tracking-[0.03em]">244개 단어</span>
    <Svg w={22} h={20}><path d="M10 18H1V2H6Q9 2 10 4Q11 2 14 2H19V9M10 4V18M11 11 21 19M20 11 11 19" stroke="#555" strokeWidth="1.600" /></Svg>
    <span className="ml-[26px] w-[108px] whitespace-nowrap tracking-[0.03em]">영어(미국)</span>
    <Svg w={22} h={22}><circle cx="10" cy="4" r="2.500" stroke="#555" strokeWidth="1.500" /><path d="M2 6Q1 9 4 9L7 10V14L4 20Q6 22 8 19L10 15M18 5Q20 8 16 9L13 10V12M12 13 21 21M21 12 12 21" stroke="#555" strokeWidth="1.500" /></Svg>
    <span className="ml-[6px] w-[544px] whitespace-nowrap tracking-[0.06em]">접근성: 조사 필요</span>
    <Svg w={22} h={22}><path d="M5 1H1V6M17 1H21V6M5 21H1V16M17 21H21V16M6 5H12L16 9V17H6ZM12 5V9H16" stroke="#555" strokeWidth="1.500" /></Svg>
    <span className="ml-[5px] w-[88px] whitespace-nowrap tracking-[0.06em]">포커스</span>
    <Svg w={20} h={20}><path d="M10 3Q6 0 1 2V18Q6 16 10 19Q14 16 19 18V2Q14 0 10 3V19M3.500 6H7.500M3.500 9.500H7.500M3.500 13H7.500M12.500 6H16.500M12.500 9.500H16.500M12.500 13H16.500" stroke="#444" strokeWidth="1.700" /></Svg>
    <div className="ml-[21px] flex h-full w-[60px] items-center justify-center bg-[#d2d0ce]">
      <Svg w={18} h={22}><path d="M1 1H17V21H1ZM4 5H14M4 8H14M4 11H14M4 14H14M4 17H14" stroke="#444" strokeWidth="1.500" /></Svg>
    </div>
    <Svg w={22} h={22} className="ml-[19px]"><path d="M9 20H1V1H18V7M4 5H15M4 9H10M4 13H8M4 17H7" stroke="#444" strokeWidth="1.700" /><circle cx="14.500" cy="14.500" r="6.500" stroke="#444" strokeWidth="1.700" /><ellipse cx="14.500" cy="14.500" rx="2.800" ry="6.500" stroke="#444" /><path d="M8 14.500H21" stroke="#444" /></Svg>
    <div className="ml-[26px] h-[1.5px] w-[13px] bg-[#666]" />
    <div className="ml-[8px] flex w-[148px] items-center">
      <div className="h-[2px] w-[74px] bg-[#444]" />
      <div className="h-[17px] w-[7px] bg-[#777]" />
      <div className="h-[2px] flex-1 bg-[#444]" />
    </div>
    <Svg w={13} h={13} className="ml-[6px]"><path d="M6.500 0V13M0 6.500H13" stroke="#666" strokeWidth="1.500" /></Svg>
    <span className="ml-[19px] tracking-[-0.02em]">120%</span>
  </div>
);

const WordWindow = () => (
  <div className="absolute left-[86px] top-[8px] flex h-[1470px] w-[1537px] flex-col border-2 border-t-0 border-[#2b579a] shadow-[0_2px_8px_rgba(0,0,0,0.5)]">
    <TitleBar />
    <Ribbon />
    <Page />
    <StatusBar />
  </div>
);

/* ---------- taskbar ---------- */

const Taskbar = () => (
  <div className="absolute bottom-0 left-0 flex h-[60px] w-[2560px] items-center bg-[#d9d9d9] text-black">
    <Svg w={24} h={24} className="ml-[24px]"><path d="M0 3.500 10 2V11.500H0ZM11 1.800 24 0V11.500H11ZM0 12.500H10V22L0 20.500ZM11 12.500H24V24L11 22.200Z" fill="#000" /></Svg>
    <div className="ml-[25px] flex h-[58px] w-[515px] shrink-0 items-center border-2 border-[#c9c9c9] bg-white text-[#222]">
      <Svg w={24} h={25} className="ml-[16px]"><circle cx="15" cy="8.500" r="7.500" stroke="#111" strokeWidth="1.700" /><path d="M9.500 14 1 23.500" stroke="#111" strokeWidth="1.700" /></Svg>
      <span className="ml-[17px] mt-[3px] whitespace-nowrap text-[23px] tracking-[0.063em] [word-spacing:3px]">검색하려면 여기에 입력하십시오.</span>
    </div>
    <Svg w={25} h={24} className="ml-[24px]"><path d="M1 0V4H16V0M1 24V20H16V24M1 7H16V17H1ZM23 0V5M23 12V24" stroke="#000" strokeWidth="1.300" /><rect x="21.500" y="7" width="3" height="3" fill="#000" /></Svg>
    <Svg w={32} h={28} className="ml-[48px]">
      <path d="M0 1H13L15 4V8H0Z" fill="#dd9f10" /><rect y="3" width="32" height="24" rx="1.500" fill="#fdd466" />
      <path d="M0 1H13L15 3 13 5H0Z" fill="#dd9f10" />
      <path d="M5 27V17Q5 15 7 15H24Q26 15 26 17V27H21V20H10V27Z" fill="#3a96dd" />
    </Svg>
    <div className="ml-[41px]"><KakaoIcon s={36} r={3} /></div>
    <Svg w={33} h={34} className="ml-[40px]">
      <path d="M28 4 32 6 30 32 22 33Z" fill="#9b7a43" /><path d="M25 3 30 4 28 31 16 33Z" fill="#f3f3ee" />
      <path d="M13 2 28 4 17 33 0 25Z" fill="#6fb5c4" /><path d="M13 2 28 4 25 10 10 8Z" fill="#b9e2ea" />
      <path d="M13 2H28" stroke="#777" strokeWidth="2.500" strokeDasharray="1.500 1.200" />
    </Svg>
    <Svg w={30} h={36} className="ml-[44px]">
      <path d="M3 5Q8 0 15 2 28 6 27 17 26 24 19 25" stroke="#d43f12" strokeWidth="4.500" /><path d="M5 8Q4 17 12 22" stroke="#d43f12" strokeWidth="2" />
      <path d="M13 1H17L16 24H13ZM22 13 25 19 11 28 9 25Z" fill="#bfc3c7" />
      <circle cx="5" cy="27.500" r="3.600" stroke="#0f63b5" strokeWidth="2.600" /><circle cx="16.500" cy="31" r="3.600" stroke="#1a9be6" strokeWidth="2.600" />
    </Svg>
    <div className="ml-[30px] flex h-[60px] w-[61px] shrink-0 flex-col items-center justify-end">
      <Svg w={38} h={36} className="mb-[7px]">
        <circle cx="18" cy="6" r="5.500" fill="#7b83eb" /><circle cx="30" cy="7" r="4" fill="#5059c9" />
        <rect x="24" y="13" width="12" height="15" rx="3" fill="#5059c9" /><path d="M10 13H27V24Q26 32 18 32T10 24Z" fill="#7b83eb" />
        <rect y="7" width="18" height="18" rx="1.500" fill="#464eb8" />
        <text x="9" y="20.500" fill="#fff" fontSize="12.500" fontWeight="700" textAnchor="middle" fontFamily="Open Sans">T</text>
        <circle cx="30" cy="28" r="7.500" fill="#6bb700" stroke="#fff" strokeWidth="1.500" /><path d="M26.500 28 29 30.500 33.500 25.500" stroke="#fff" strokeWidth="1.800" />
      </Svg>
      <div className="h-[3px] w-full bg-[#e88e91]" />
    </div>
    <VsShape w={37} h={36} className="ml-[26px]" />
    <div className="ml-[26px] flex h-[60px] w-[60px] shrink-0 flex-col items-center justify-end">
      <div className="mb-[10px]"><ChromeMark s={34} /></div>
      <div className="flex h-[3px] w-full"><div className="w-[49px] bg-[#e88e91]" /><div className="flex-1 bg-[#f2b8ba]" /></div>
    </div>
    <div className="ml-[9px] flex h-[60px] w-[73px] shrink-0 flex-col items-center justify-end bg-[#f1f1f1]">
      <Svg w={36} h={32} className="mb-[11px] mr-[2px]">
        <rect x="8" width="28" height="32" rx="2" fill="#103f91" /><rect x="8" width="28" height="8" fill="#41a5ee" /><rect x="8" y="8" width="28" height="8" fill="#2b7cd3" /><rect x="8" y="16" width="28" height="8" fill="#185abd" />
        <rect y="7" width="18" height="18" rx="1.500" fill="#185abd" />
        <text x="9" y="20.500" fill="#fff" fontSize="12.500" fontWeight="700" textAnchor="middle" fontFamily="Open Sans">W</text>
      </Svg>
      <div className="h-[3px] w-full bg-[#e88e91]" />
    </div>
    <Svg w={27} h={28} className="ml-[731px]">
      <defs><linearGradient id="moon" x1="1" y1="0" x2="0" y2="1"><stop offset="0.2" stopColor="#ffe600" /><stop offset="1" stopColor="#ffa000" /></linearGradient></defs>
      <path d="M17 0A15.500 15.500 0 1 1 0 22Q17 20 17 0Z" fill="url(#moon)" />
    </Svg>
    <span className="ml-[16px] mt-[3px] w-[125px] shrink-0 whitespace-nowrap text-[21px]">17°C<span className="ml-[3px] tracking-[0.04em]"> 맑음</span></span>
    <Svg w={18} h={11}><path d="M1 10 9 1.500 17 10" stroke="#000" strokeWidth="1.500" /></Svg>
    <Svg w={24} h={25} className="ml-[15px]">
      <path d="M1 4 22 1V14M1 4V20L12 22" stroke="#222" strokeWidth="1.300" /><path d="M7 12Q8 8 13 9M15 7V10H12M16 13Q15 17 10 16M7 18V15H10" stroke="#222" strokeWidth="1.300" />
      <circle cx="17" cy="19.500" r="5.300" fill="#ff9800" />
    </Svg>
    <Svg w={22} h={20} className="ml-[13px]"><path d="M1 7H4L9 2V18L4 13H1ZM12 7Q14 10 12 13M15 5Q18 10 15 15" stroke="#111" strokeWidth="1.300" /><path d="M18 2Q22.500 10 18 18" stroke="#999" strokeWidth="1.300" /></Svg>
    <Svg w={19} h={20} className="ml-[17px]"><path d="M1 19Q2 4 18 2M6 19Q7 9 18 7.500M11 19Q11 13 18 12.500" stroke="#333" strokeWidth="1.300" /><circle cx="16.500" cy="17.500" r="1.600" fill="#000" /></Svg>
    <Svg w={23} h={14} className="ml-[14px]"><path d="M1 1H20V13H1ZM21.500 5V9" stroke="#000" strokeWidth="1.400" /><rect x="2.500" y="3" width="4" height="8" fill="#000" /></Svg>
    <span className="ml-[10px] w-[24px] shrink-0 text-[24px]">가</span>
    <div className="ml-[8px] flex w-[108px] shrink-0 flex-col items-center whitespace-nowrap text-[18px] leading-[28px]">
      <span className="tracking-[0.03em]">오전 1:46</span>
      <span className="tracking-[-0.01em]">2022-05-23</span>
    </div>
    <Svg w={24} h={24} className="ml-[21px]"><path d="M1 1H23V19H15L11.500 23 8 19H1Z" stroke="#000" strokeWidth="1.400" /></Svg>
    <div className="ml-[31px] h-full w-px bg-[#a8a8a8]" />
  </div>
);

export default function App() {
  return (
    <div className="relative h-[1600px] w-[2560px] overflow-hidden bg-black font-['Open_Sans','Noto_Sans_CJK_KR',sans-serif]">
      <Desktop />
      <RightDesktop />
      <BrowserWindow />
      <WordWindow />
      <Taskbar />
    </div>
  );
}
